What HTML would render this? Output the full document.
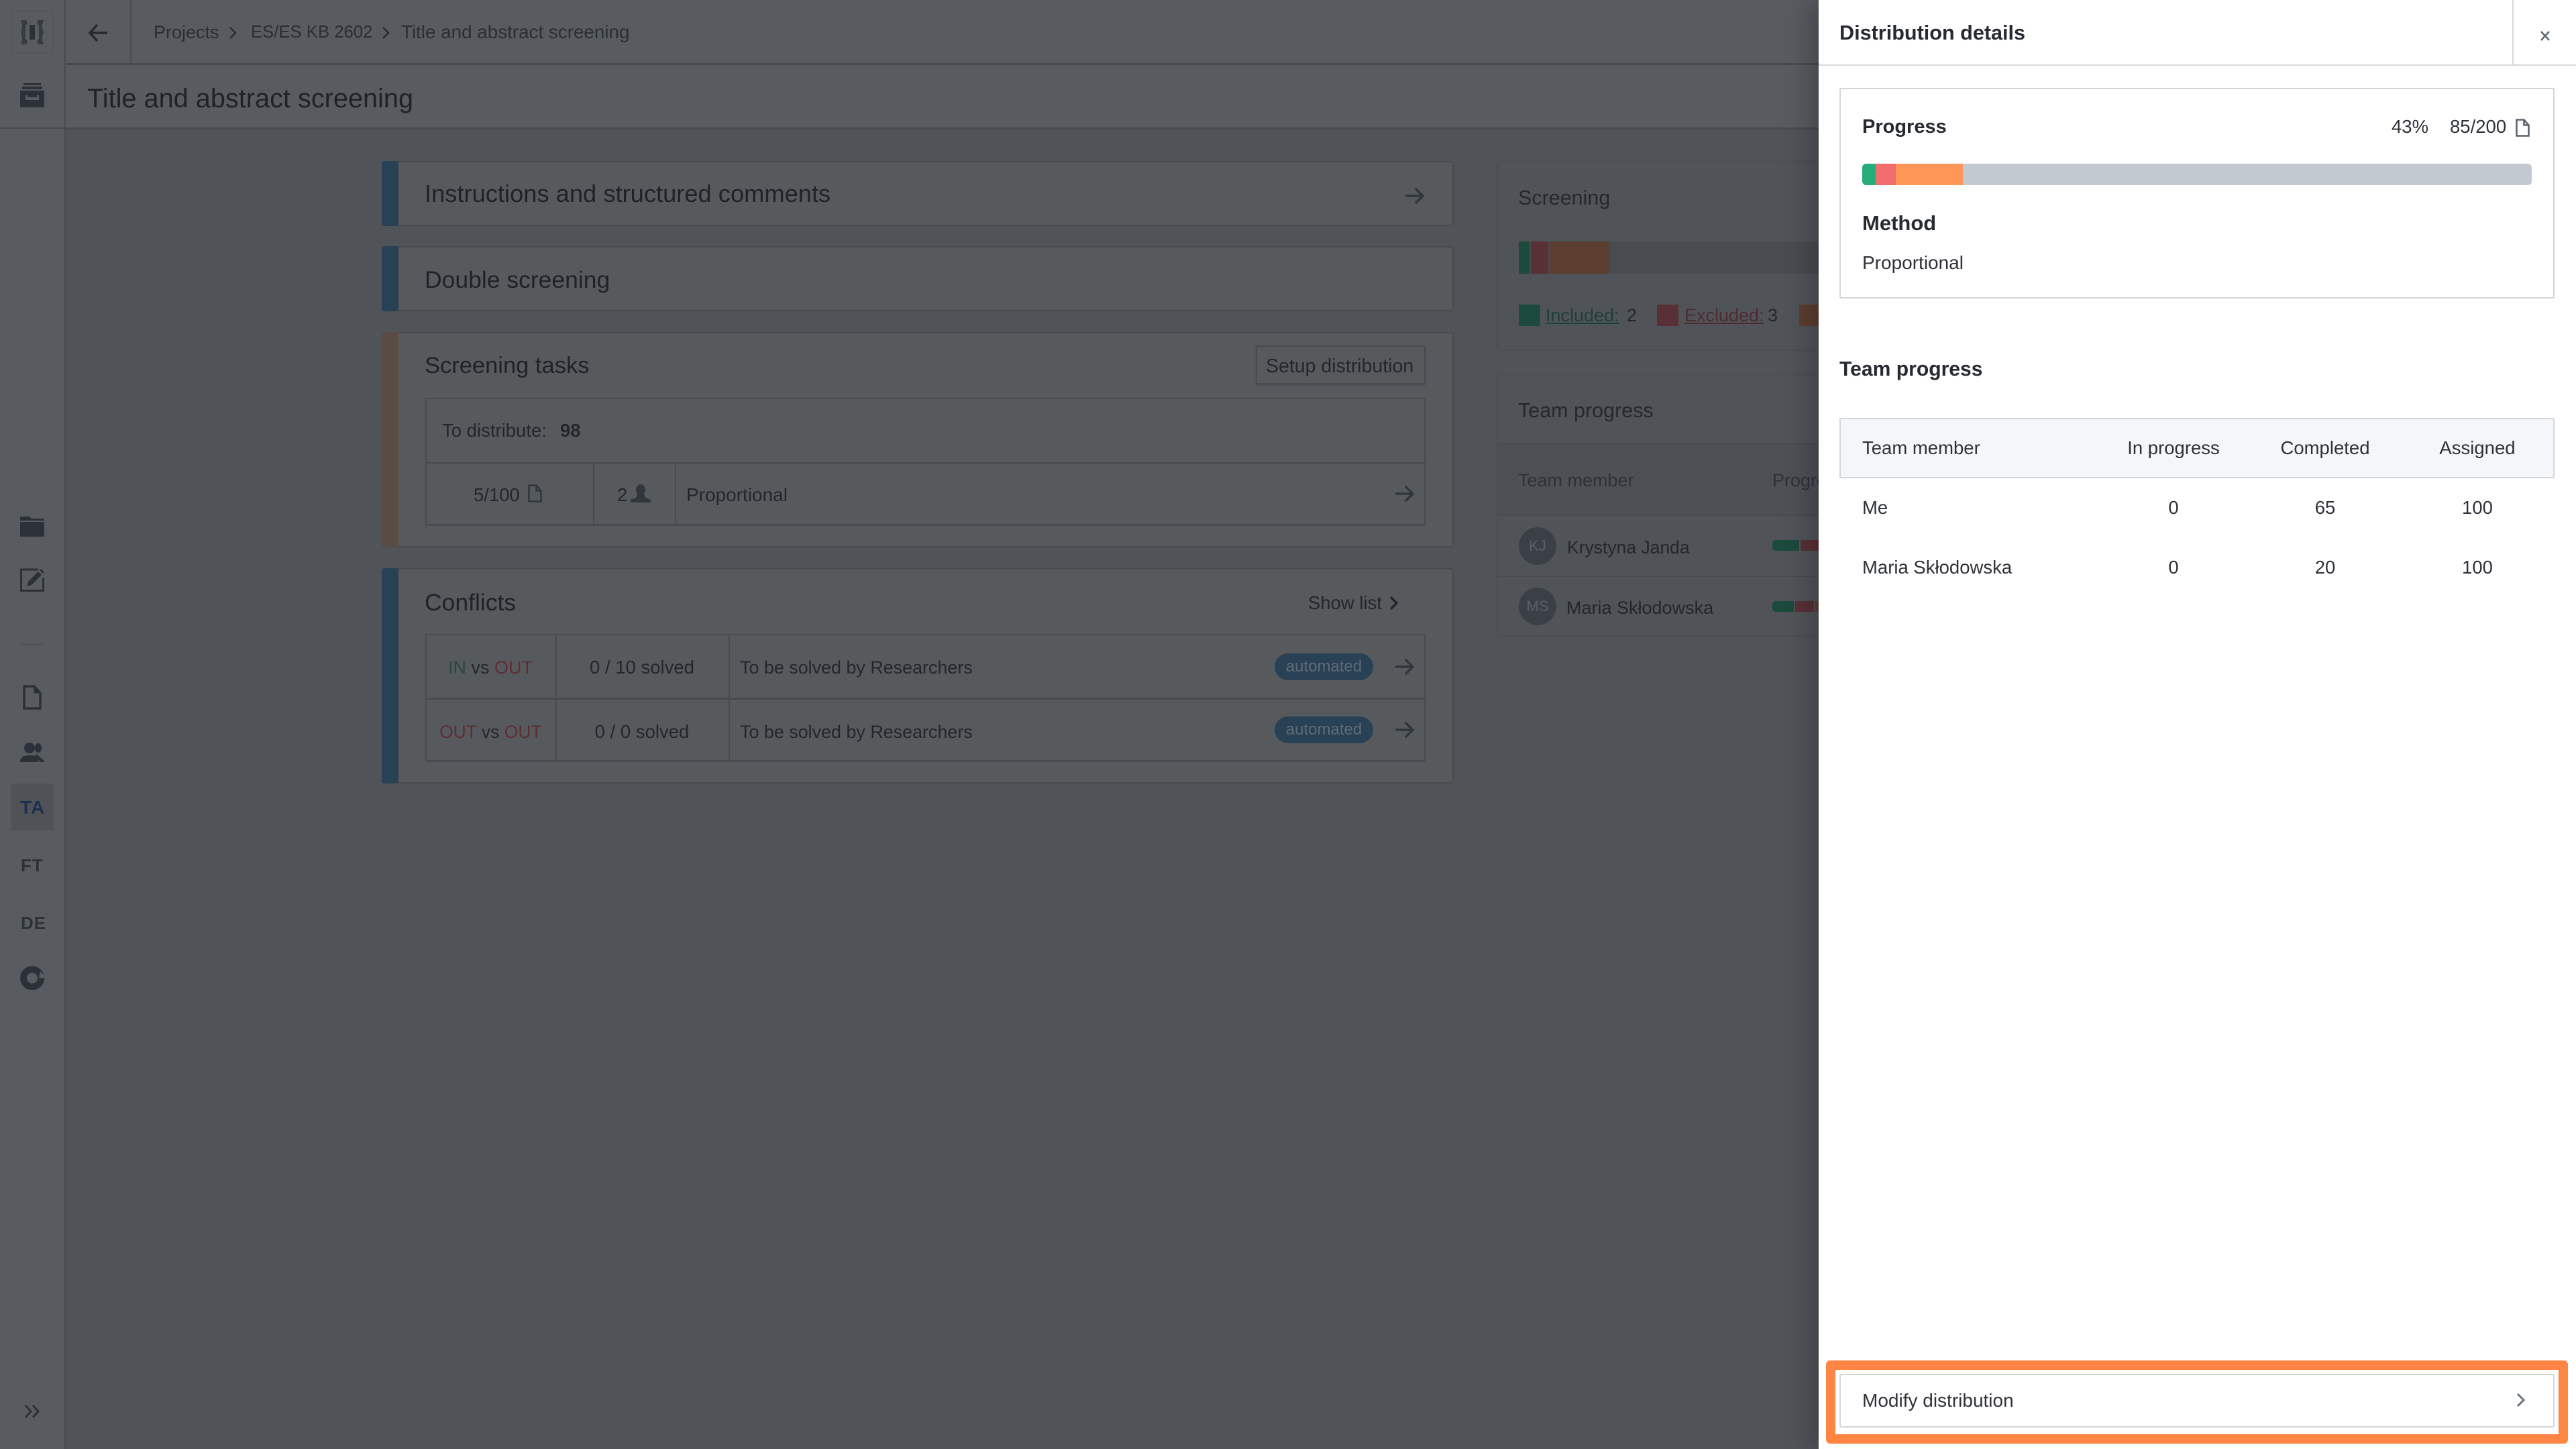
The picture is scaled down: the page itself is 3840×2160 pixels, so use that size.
<!DOCTYPE html>
<html lang="en">
<head>
<meta charset="utf-8">
<title>Title and abstract screening</title>
<style>
html,body{margin:0;padding:0;width:3840px;height:2160px;overflow:hidden;background:#505358;font-family:"Liberation Sans","Noto Sans CJK JP",sans-serif;color:#23272c}
div,svg{position:absolute;box-sizing:border-box}
.t{position:absolute;white-space:nowrap;line-height:0;font-size:27.5px}
.c{transform:translateX(-50%)}
.card{background:#565a5d;border:2px solid #484b4e;border-radius:4px}
.card2{background:#505458;border:2px solid #4b4f53;border-radius:3px}
.strip{left:-2px;top:-2px;bottom:-2px;width:25px;border-radius:4px 0 0 4px}
.h{font-size:35.5px;color:#1f2328}
.l{background:#484b4e}
.p{color:#2e3238}
.b{font-weight:bold;font-size:30px;color:#272b31}
.bd{border:2px solid #d3d6da}
.badge{background:#294154;border-radius:20px;width:147px;height:40px;left:1900px;color:#5f6b76;font-size:24px;line-height:40px;text-align:center}
</style>
</head>
<body>
<!-- sidebar -->
<div style="left:0;top:0;width:96px;height:2160px;background:#585b5f"></div>
<div class="l" style="left:96px;top:0;width:2px;height:2160px"></div>
<div style="left:98px;top:0;width:2620px;height:95px;background:#585b5f"></div>
<div style="left:98px;top:97px;width:2620px;height:94px;background:#585b5f"></div>
<div class="l" style="left:98px;top:94px;width:2620px;height:3px"></div>
<div class="l" style="left:98px;top:190px;width:2620px;height:3px"></div>
<div class="l" style="left:0;top:190px;width:96px;height:2px"></div>
<div class="l" style="left:194px;top:0;width:2px;height:94px"></div>
<div style="left:16px;top:16px;width:64px;height:64px;border:2px solid #53565a;border-radius:4px"></div>

<svg style="left:30px;top:30px" width="36" height="36" viewBox="0 0 36 36" fill="#2c3038"><path d="M1 0h8l2 5-3 3v20l3 3-2 5H1l2-6v-6L1 18l2-6V6zM35 0h-8l-2 5 3 3v20l-3 3 2 5h8l-2-6v-6l2-6-2-6V6z" opacity=".75"/><rect x="14" y="7" width="8" height="22"/></svg>

<svg style="left:30px;top:124px" width="36" height="36" viewBox="0 0 36 36" fill="#2c3038"><rect x="5" y="0" width="26" height="3"/><rect x="3" y="5" width="30" height="4"/><path d="M0 11h36v25H0zM8 18v7h20v-7h-3v3H11v-3z" fill-rule="evenodd"/></svg>

<svg style="left:30px;top:770px" width="36" height="30" viewBox="0 0 36 30" fill="#2c3038"><path d="M0 0h14l3 3h19v3H0zM0 8h36v22H0z"/></svg>
<svg style="left:30px;top:846px" width="36" height="36" viewBox="0 0 36 36" fill="none" stroke="#2c3038"><path d="M27 3H1.500v31.500h33V16" stroke-width="3"/><path d="M10 28l2-7L27 6l5 5-15 15z" fill="#2c3038" stroke="none"/><path d="M29 4l2-2 5 5-2 2z" fill="#2c3038" stroke="none"/></svg>
<div style="left:32px;top:960px;width:32px;height:2px;background:#4d5054"></div>
<svg style="left:34px;top:1021px" width="28" height="37" viewBox="0 0 28 37" fill="none" stroke="#2c3038" stroke-width="3.500"><path d="M2 2h15l9 10v23H2z"/><path d="M17 2v10h9" fill="#2c3038" stroke-width="1"/></svg>
<svg style="left:30px;top:1106px" width="36" height="30" viewBox="0 0 36 30" fill="#2c3038"><circle cx="14" cy="9" r="8"/><path d="M0 30c0-7 5-9 10-10h8c5 1 9 3 9 10z"/><ellipse cx="27" cy="9" rx="5" ry="7"/><path d="M24 18l12 10v2h-6l-8-9z"/></svg>
<div style="left:16px;top:1168px;width:64px;height:70px;background:#4f5358"></div>
<div class="t" style="left:30px;top:1204px;font-size:28px;font-weight:bold;color:#1d3050;letter-spacing:1px">TA</div>
<div class="t" style="left:31px;top:1290px;font-size:26px;font-weight:bold;color:#2c3038;letter-spacing:1px">FT</div>
<div class="t" style="left:31px;top:1376px;font-size:26px;font-weight:bold;color:#2c3038;letter-spacing:1px">DE</div>
<svg style="left:30px;top:1440px" width="36" height="36" viewBox="0 0 36 36"><circle cx="18" cy="18" r="13" fill="none" stroke="#2c3038" stroke-width="10"/><path d="M30 8l6 6v4h-8z" fill="#585b5f"/></svg>
<svg style="left:36px;top:2094px" width="24" height="20" viewBox="0 0 24 20" fill="none" stroke="#2c3038" stroke-width="3"><path d="M2 1l8 9-8 9M13 1l8 9-8 9"/></svg>

<!-- top bar -->
<svg style="left:131px;top:34px" width="30" height="30" viewBox="0 0 30 30" fill="none" stroke="#262a30" stroke-width="3.500"><path d="M29 15H3M14 3L3 15l11 12"/></svg>
<div class="t" style="left:229px;top:48px;color:#2a2e35;font-size:27px">Projects</div>
<svg style="left:341px;top:39px" width="12" height="20" viewBox="0 0 12 20" fill="none" stroke="#2a2e35" stroke-width="2.500"><path d="M2 2l8 8-8 8"/></svg>
<div class="t" style="left:374px;top:48px;color:#2a2e35;font-size:25.700px">ES/ES KB 2602</div>
<svg style="left:569px;top:39px" width="12" height="20" viewBox="0 0 12 20" fill="none" stroke="#2a2e35" stroke-width="2.500"><path d="M2 2l8 8-8 8"/></svg>
<div class="t" style="left:598px;top:48px;color:#2a2e35;font-size:27.800px">Title and abstract screening</div>
<div class="t" style="left:130px;top:147px;font-size:39.700px;color:#1f2328">Title and abstract screening</div>

<!-- card 1 -->
<div class="card" style="left:569px;top:240px;width:1598px;height:97px"><div class="strip" style="background:#294154"></div></div>
<div class="t h" style="left:633px;top:289px;font-size:36.300px">Instructions and structured comments</div>
<svg style="left:2094px;top:278px" width="30" height="28" viewBox="0 0 30 28" fill="none" stroke="#31363d" stroke-width="3.500"><path d="M1 14h26M16 3l11 11-11 11"/></svg>
<!-- card 2 -->
<div class="card" style="left:569px;top:367px;width:1598px;height:97px"><div class="strip" style="background:#294154"></div></div>
<div class="t h" style="left:633px;top:417px">Double screening</div>
<!-- card 3 -->
<div class="card" style="left:569px;top:495px;width:1598px;height:321px"><div class="strip" style="background:#5a4c45"></div></div>
<div class="t h" style="left:633px;top:545px;font-size:34.500px">Screening tasks</div>
<div style="left:1872px;top:515px;width:253px;height:58px;border:2px solid #474b4f;border-radius:3px;box-shadow:0 2px 2px #4b4e52"></div>
<div class="t" style="left:1887px;top:546px;color:#23272c;font-size:28.500px">Setup distribution</div>
<div style="left:634px;top:593px;width:1491px;height:191px;border:2px solid #484c50;border-bottom-width:3px"></div>
<div class="l" style="left:634px;top:689px;width:1491px;height:2px"></div>
<div class="l" style="left:884px;top:690px;width:2px;height:92px"></div>
<div class="l" style="left:1006px;top:690px;width:2px;height:92px"></div>
<div class="t" style="left:659px;top:642px">To distribute:</div>
<div class="t" style="left:835px;top:642px;font-weight:bold">98</div>
<div class="t" style="left:706px;top:738px">5/100</div>
<svg style="left:787px;top:722px" width="21" height="27" viewBox="0 0 21 27" fill="none" stroke="#31363d" stroke-width="2.500"><path d="M1.500 1.500h11l7 8v16h-18zM12.500 1.500v8h7"/></svg>
<div class="t" style="left:920px;top:738px">2</div>
<svg style="left:940px;top:722px" width="30" height="27" viewBox="0 0 30 27" fill="#31363d"><ellipse cx="15" cy="8" rx="7" ry="8"/><path d="M10 14h10l2 6 8 3v4H0v-4l8-3z"/></svg>
<div class="t" style="left:1023px;top:738px;font-size:28px">Proportional</div>
<svg style="left:2079px;top:722px" width="30" height="28" viewBox="0 0 30 28" fill="none" stroke="#31363d" stroke-width="3.500"><path d="M1 14h26M16 3l11 11-11 11"/></svg>
<!-- card 4 -->
<div class="card" style="left:569px;top:847px;width:1598px;height:321px"><div class="strip" style="background:#294154"></div></div>
<div class="t h" style="left:633px;top:898px">Conflicts</div>
<div class="t" style="left:1950px;top:899px;color:#23272c">Show list</div>
<svg style="left:2071px;top:888px" width="14" height="22" viewBox="0 0 14 22" fill="none" stroke="#23272c" stroke-width="3.500"><path d="M2 2l9 9-9 9"/></svg>
<div style="left:634px;top:945px;width:1491px;height:191px;border:2px solid #484c50;border-bottom-width:3px"></div>
<div class="l" style="left:634px;top:1040px;width:1491px;height:3px"></div>
<div class="l" style="left:828px;top:947px;width:2px;height:187px"></div>
<div class="l" style="left:1086px;top:947px;width:2px;height:187px"></div>
<div class="t" style="left:668px;top:995px;font-size:27px"><span style="color:#26493e">IN</span> vs <span style="color:#5e2d33">OUT</span></div>
<div class="t c" style="left:957px;top:995px">0 / 10 solved</div>
<div class="t" style="left:1103px;top:995px;font-size:26.900px">To be solved by Researchers</div>
<div class="badge" style="top:974px">automated</div>
<svg style="left:2079px;top:980px" width="30" height="28" viewBox="0 0 30 28" fill="none" stroke="#31363d" stroke-width="3.500"><path d="M1 14h26M16 3l11 11-11 11"/></svg>
<div class="t" style="left:655px;top:1091px;font-size:26.500px"><span style="color:#5e2d33">OUT</span> vs <span style="color:#5e2d33">OUT</span></div>
<div class="t c" style="left:957px;top:1091px">0 / 0 solved</div>
<div class="t" style="left:1103px;top:1091px;font-size:26.900px">To be solved by Researchers</div>
<div class="badge" style="top:1068px">automated</div>
<svg style="left:2079px;top:1074px" width="30" height="28" viewBox="0 0 30 28" fill="none" stroke="#31363d" stroke-width="3.500"><path d="M1 14h26M16 3l11 11-11 11"/></svg>

<!-- right column -->
<div class="card2" style="left:2231px;top:240px;width:560px;height:283px"></div>
<div class="t" style="left:2263px;top:295px;font-size:30.500px;color:#25292f">Screening</div>
<div style="left:2264px;top:360px;width:450px;height:48px;background:#484c50"></div>
<div style="left:2264px;top:360px;width:16px;height:48px;background:#1c4a3c"></div>
<div style="left:2282px;top:360px;width:26px;height:48px;background:#583036"></div>
<div style="left:2310px;top:360px;width:88px;height:48px;background:#5c3e30"></div>
<div style="left:2264px;top:454px;width:32px;height:32px;background:#1c4a3c"></div>
<div class="t" style="left:2304px;top:470px;font-size:27px;color:#1e3f3a;text-decoration:underline">Included:</div>
<div class="t" style="left:2425px;top:470px;font-size:27px">2</div>
<div style="left:2470px;top:454px;width:32px;height:32px;background:#583036"></div>
<div class="t" style="left:2511px;top:470px;font-size:27px;color:#4e2a31;text-decoration:underline">Excluded:</div>
<div class="t" style="left:2635px;top:470px;font-size:27px">3</div>
<div style="left:2682px;top:454px;width:32px;height:32px;background:#5c3e30"></div>

<div class="card2" style="left:2231px;top:557px;width:560px;height:392px"></div>
<div class="t" style="left:2263px;top:612px;font-size:30.500px;color:#25292f">Team progress</div>
<div style="left:2233px;top:661px;width:490px;height:108px;background:#4d5055;border-top:2px solid #494d51;border-bottom:2px solid #494d51"></div>
<div class="t" style="left:2263px;top:716px;font-size:27px;color:#2e3238">Team member</div>
<div class="t" style="left:2642px;top:716px;font-size:27px;color:#2e3238">Progress</div>
<div style="left:2233px;top:858px;width:490px;height:2px;background:#494d51"></div>
<div style="left:2264px;top:786px;width:56px;height:56px;border-radius:50%;background:#3b4047"></div>
<div class="t c" style="left:2292px;top:814px;font-size:22px;color:#5a6066">KJ</div>
<div class="t" style="left:2336px;top:816px;font-size:26.500px;color:#23272c">Krystyna Janda</div>
<div style="left:2264px;top:876px;width:56px;height:56px;border-radius:50%;background:#3b4047"></div>
<div class="t c" style="left:2292px;top:904px;font-size:22px;color:#5a6066">MS</div>
<div class="t" style="left:2335px;top:906px;font-size:27px;color:#23272c">Maria Skłodowska</div>
<div style="left:2642px;top:805px;width:40px;height:16px;background:#1c4a3c;border-radius:5px 0 0 5px"></div>
<div style="left:2684px;top:805px;width:40px;height:16px;background:#583036"></div>
<div style="left:2642px;top:896px;width:32px;height:16px;background:#1c4a3c;border-radius:5px 0 0 5px"></div>
<div style="left:2676px;top:896px;width:28px;height:16px;background:#583036"></div>
<div style="left:2706px;top:896px;width:16px;height:16px;background:#5c3e30"></div>

<!-- panel -->
<div style="left:2711px;top:0;width:1129px;height:2160px;background:#fff;box-shadow:-14px 0 36px rgba(0,0,0,.22)"></div>
<div style="left:2711px;top:96px;width:1129px;height:2px;background:#d5d7da"></div>
<div style="left:3745px;top:0;width:2px;height:96px;background:#d5d7da"></div>
<div class="t b" style="left:2742px;top:49px;font-size:30.600px">Distribution details</div>
<svg style="left:3786px;top:45px" width="16" height="17" viewBox="0 0 16 17" fill="none" stroke="#5f6873" stroke-width="2.600"><path d="M2 2l12 13M14 2L2 15"/></svg>

<div class="bd" style="left:2742px;top:131px;width:1066px;height:314px;border-radius:2px"></div>
<div class="t b" style="left:2776px;top:189px;font-size:29px">Progress</div>
<div class="t p" style="left:3565px;top:189px">43%</div>
<div class="t p" style="left:3652px;top:189px">85/200</div>
<svg style="left:3750px;top:177px" width="21" height="27" viewBox="0 0 21 27" fill="none" stroke="#5b6470" stroke-width="2.600"><path d="M1.500 1.500h11l7 8v16h-18zM12.500 1.500v8h7"/></svg>
<div style="left:2776px;top:244px;width:998px;height:32px;background:#c3c9d0;border-radius:6px;overflow:hidden">
<div style="left:0;top:0;width:20px;height:32px;background:#25ae7b"></div>
<div style="left:20px;top:0;width:30px;height:32px;background:#f26d6d"></div>
<div style="left:50px;top:0;width:100px;height:32px;background:#ff9759"></div>
</div>
<div class="t b" style="left:2776px;top:333px;font-size:31px">Method</div>
<div class="t p" style="left:2776px;top:392px;font-size:28px">Proportional</div>

<div class="t b" style="left:2742px;top:551px;font-size:30.100px">Team progress</div>
<div class="bd" style="left:2742px;top:623px;width:1066px;height:90px;background:#f5f6f8"></div>
<div class="t p" style="left:2776px;top:668px">Team member</div>
<div class="t p c" style="left:3240px;top:668px">In progress</div>
<div class="t p c" style="left:3466px;top:668px">Completed</div>
<div class="t p c" style="left:3693px;top:668px">Assigned</div>
<div class="t p" style="left:2776px;top:757px">Me</div>
<div class="t p c" style="left:3240px;top:757px">0</div>
<div class="t p c" style="left:3466px;top:757px">65</div>
<div class="t p c" style="left:3693px;top:757px">100</div>
<div class="t p" style="left:2776px;top:846px">Maria Skłodowska</div>
<div class="t p c" style="left:3240px;top:846px">0</div>
<div class="t p c" style="left:3466px;top:846px">20</div>
<div class="t p c" style="left:3693px;top:846px">100</div>

<div style="left:2722px;top:2028px;width:1106px;height:124px;border:14.500px solid #ff8544;border-radius:6px"></div>
<div class="bd" style="left:2742px;top:2048px;width:1066px;height:80px;border-radius:3px"></div>
<div class="t p" style="left:2776px;top:2088px;font-size:28px">Modify distribution</div>
<svg style="left:3751px;top:2076px" width="14" height="22" viewBox="0 0 14 22" fill="none" stroke="#6b7480" stroke-width="3"><path d="M2 2l9 9-9 9"/></svg>
</body>
</html>
